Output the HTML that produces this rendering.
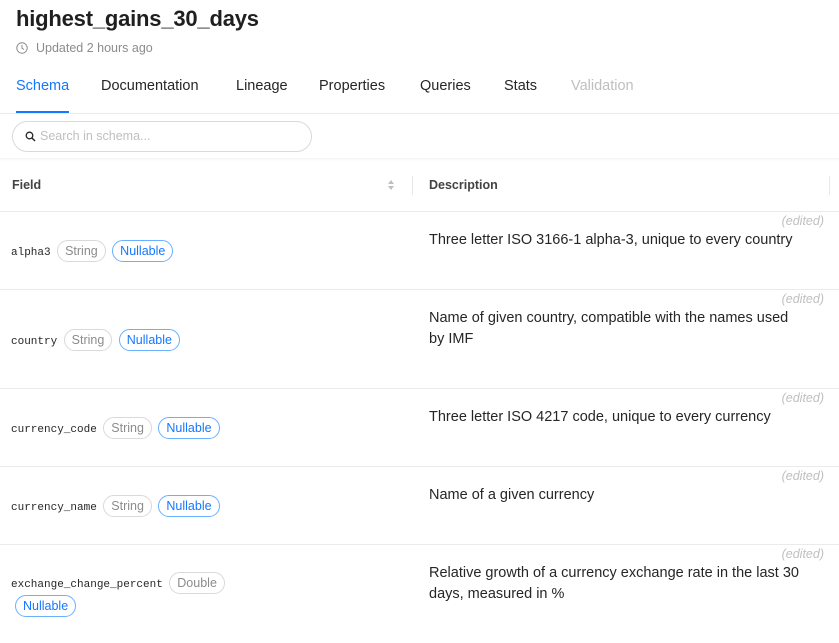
<!DOCTYPE html>
<html><head><meta charset="utf-8"><style>
*{box-sizing:border-box;margin:0;padding:0}
body{width:839px;height:643px;overflow:hidden;background:#fff;font-family:"Liberation Sans",sans-serif;color:#262626;position:relative}
.abs{position:absolute}
.title{left:16px;top:6px;font-size:22px;font-weight:bold;color:#1f1f1f;letter-spacing:-0.2px}
.upd{left:16px;top:41px;font-size:12.5px;color:#8c8c8c}
.tab{top:78px;font-size:14.5px;color:#262626}
.line{left:0;width:839px;height:1px;background:#ebebeb}
.search{left:12px;top:121px;width:300px;height:31px;border:1px solid #d9d9d9;border-radius:16px;font-size:12.5px;color:#bfbfbf;padding:7px 0 0 27px}
.th{top:178px;font-size:12.5px;font-weight:bold;color:#434343}
.mono{font-family:"Liberation Mono",monospace;font-size:11px;color:#262626}
.b{display:inline-block;height:22px;line-height:20px;border:1px solid #d9d9d9;border-radius:11px;padding:0 7px;font-size:12.5px;color:#8c8c8c;vertical-align:middle;margin-left:2px}
.b.n{border-color:#69b1ff;color:#1677ff}
.desc{left:429px;font-size:14.5px;line-height:21px;color:#262626;width:372px}
.ed{right:15px;font-size:12.5px;font-style:italic;color:#bfbfbf}
.f{left:11px}
</style></head><body>
<div class="abs title">highest_gains_30_days</div>
<svg class="abs" style="left:16px;top:42px" width="12" height="12" viewBox="0 0 12 12"><circle cx="6" cy="6" r="5.2" fill="none" stroke="#8c8c8c" stroke-width="1"/><path d="M6 3v3.2l2 1.3" fill="none" stroke="#8c8c8c" stroke-width="1"/></svg>
<div class="abs upd" style="left:36px">Updated 2 hours ago</div>
<div class="abs tab" style="left:16px;color:#1677ff">Schema</div>
<div class="abs tab" style="left:101px">Documentation</div>
<div class="abs tab" style="left:236px">Lineage</div>
<div class="abs tab" style="left:319px">Properties</div>
<div class="abs tab" style="left:420px">Queries</div>
<div class="abs tab" style="left:504px">Stats</div>
<div class="abs tab" style="left:571px;color:#bfbfbf">Validation</div>
<div class="abs" style="left:16px;top:111px;width:53px;height:2px;background:#1677ff"></div>
<div class="abs line" style="top:113px"></div>
<div class="abs search">Search in schema...</div>
<svg class="abs" style="left:25px;top:131px" width="11" height="11" viewBox="0 0 11 11"><circle cx="4.5" cy="4.5" r="3.3" fill="none" stroke="#262626" stroke-width="1.3"/><path d="M7 7l3 3" stroke="#262626" stroke-width="1.4"/></svg>
<div class="abs" style="left:0;top:158px;width:839px;height:3px;background:linear-gradient(#f3f3f3,#fff)"></div>
<div class="abs th" style="left:12px">Field</div>
<svg class="abs" style="left:387px;top:179px" width="8" height="12" viewBox="0 0 8 12"><path d="M4 1L7 5H1z M4 11L7 7H1z" fill="#bfbfbf"/></svg>
<div class="abs" style="left:412px;top:176px;width:1px;height:19px;background:#e8e8e8"></div>
<div class="abs" style="left:829px;top:176px;width:1px;height:19px;background:#e8e8e8"></div>
<div class="abs th" style="left:429px">Description</div>
<div class="abs line" style="top:211px"></div>

<div class="abs ed" style="top:214px">(edited)</div>
<div class="abs f" style="top:240px"><span class="mono">alpha3</span> <span class="b">String</span> <span class="b n">Nullable</span></div>
<div class="abs desc" style="top:230px">Three letter ISO 3166-1 alpha-3, unique to every country</div>
<div class="abs line" style="top:289px"></div>

<div class="abs ed" style="top:292px">(edited)</div>
<div class="abs f" style="top:329px"><span class="mono">country</span> <span class="b">String</span> <span class="b n">Nullable</span></div>
<div class="abs desc" style="top:308px">Name of given country, compatible with the names used by IMF</div>
<div class="abs line" style="top:388px"></div>

<div class="abs ed" style="top:391px">(edited)</div>
<div class="abs f" style="top:417px"><span class="mono">currency_code</span> <span class="b">String</span> <span class="b n">Nullable</span></div>
<div class="abs desc" style="top:407px">Three letter ISO 4217 code, unique to every currency</div>
<div class="abs line" style="top:466px"></div>

<div class="abs ed" style="top:469px">(edited)</div>
<div class="abs f" style="top:495px"><span class="mono">currency_name</span> <span class="b">String</span> <span class="b n">Nullable</span></div>
<div class="abs desc" style="top:485px">Name of a given currency</div>
<div class="abs line" style="top:544px"></div>

<div class="abs ed" style="top:547px">(edited)</div>
<div class="abs f" style="top:572px"><span class="mono">exchange_change_percent</span> <span class="b">Double</span></div>
<div class="abs" style="left:13px;top:595px"><span class="b n">Nullable</span></div>
<div class="abs desc" style="top:563px">Relative growth of a currency exchange rate in the last 30 days, measured in %</div>
</body></html>
